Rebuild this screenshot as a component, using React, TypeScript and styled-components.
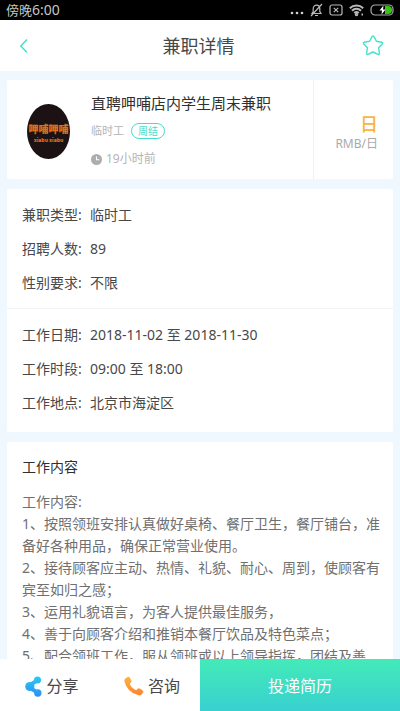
import React from "react";
import styled, { createGlobalStyle, css } from "styled-components";

const GlobalStyle = createGlobalStyle`
  *, *::before, *::after { box-sizing: border-box; }
  body {
    margin: 0;
    background: #eff7ff;
    color: #484848;
    font-family: "Noto Sans", "Noto Sans CJK SC", sans-serif;
    font-size: 14px;
    line-height: 22px;
  }
  h1, h2, p, dl, dt, dd { margin: 0; font: inherit; }
  button { border: 0; padding: 0; background: none; color: inherit; font: inherit; cursor: pointer; }
  svg { display: block; flex: none; }
`;

const Screen = styled.div`
  display: flex;
  flex-direction: column;
  height: 100vh;
`;

const StatusBar = styled.div`
  display: flex;
  align-items: center;
  justify-content: space-between;
  flex: none;
  height: 20px;
  padding: 0 6px;
  background: #000;
  color: #c4c4c4;
  font-size: 13px;
`;

const Clock = styled.span`
  font-size: 14px;
`;

const StatusIcons = styled.div`
  display: flex;
  align-items: center;
  gap: 6px;
`;

const Header = styled.header`
  display: flex;
  align-items: center;
  justify-content: space-between;
  flex: none;
  height: 51px;
  padding: 0 15px 0 12px;
  background: #fff;
  color: #47e0c8;
`;

const Title = styled.h1`
  color: #484848;
  font-size: 18px;
`;

const IconButton = styled.button`
  display: flex;
  align-items: center;
  justify-content: center;
  width: 24px;
  height: 32px;
`;

const Content = styled.main`
  display: flex;
  flex-direction: column;
  gap: 10px;
  flex: 1;
  min-height: 0;
  padding: 9px 7px 0;
  overflow-y: auto;
  scrollbar-width: none;
`;

const Card = styled.section`
  flex: none;
  background: #fff;
  border-radius: 2px;
`;

const JobCard = styled(Card)`
  display: flex;
  min-height: 99px;
`;

const JobMain = styled.div`
  display: flex;
  align-items: center;
  gap: 21px;
  flex: 1;
  padding: 3px 20px 0;
`;

const JobText = styled.div`
  display: flex;
  flex-direction: column;
  gap: 6px;
`;

const JobTitle = styled.h2`
  color: #303030;
  font-size: 15px;
`;

const Meta = styled.div<{ $gap: number; $size: number }>`
  display: flex;
  align-items: center;
  gap: ${(p) => p.$gap}px;
  color: #b4b4b4;
  font-size: ${(p) => p.$size}px;
`;

const Tag = styled.span`
  padding: 0 6px;
  border: 1px solid #47dccb;
  border-radius: 8px;
  color: #47dccb;
  font-size: 10px;
  line-height: 14px;
`;

const Pay = styled.div`
  display: flex;
  flex-direction: column;
  justify-content: center;
  align-items: flex-end;
  width: 80px;
  padding: 8px 15px 0 0;
  border-left: 1px solid #e6f2fd;
  color: #aaa;
  font-size: 12px;
  line-height: 20px;
`;

const PayAmount = styled.strong`
  color: #fbb53c;
  font-size: 18px;
  font-weight: 500;
`;

const FactList = styled.dl<{ $divided?: boolean }>`
  display: flex;
  flex-direction: column;
  gap: 12px;
  padding: 15px 15px 14px;
  ${(p) =>
    p.$divided &&
    css`
      padding-bottom: 18px;
      border-top: 1px solid #f1f4f7;
    `}
`;

const Fact = styled.div`
  display: flex;
  gap: 8px;
`;

const FactLabel = styled.dt`
  min-width: 60px;
  white-space: nowrap;
`;

const DetailCard = styled(Card)`
  padding: 14px 12px 15px 15px;
`;

const DetailTitle = styled.h2`
  margin-bottom: 13px;
  color: #303030;
`;

const Paragraph = styled.p`
  color: #707070;
`;

const ActionBar = styled.footer`
  display: flex;
  flex: none;
  height: 52px;
  background: #fff;
  font-size: 16px;
`;

const Contacts = styled.div`
  display: flex;
  flex: 1;
`;

const ContactButton = styled.button`
  display: flex;
  align-items: center;
  justify-content: center;
  gap: 4px;
  flex: 1;
  padding: 2px 0 0 4px;
`;

const ApplyButton = styled.button`
  flex: 1;
  padding-top: 2px;
  background: linear-gradient(#43eab8, #38d0d0);
  color: #fff;
`;

const MoreIcon = () => (
  <svg width="14" height="14" viewBox="0 0 14 14" fill="#d0d0d0" aria-hidden="true">
    <circle cx="2" cy="10" r="1.3" />
    <circle cx="7" cy="10" r="1.3" />
    <circle cx="12" cy="10" r="1.3" />
  </svg>
);

const MutedIcon = () => (
  <svg width="13" height="14" viewBox="0 0 13 14" fill="none" stroke="#b8b8b8" strokeWidth="1.2" aria-hidden="true">
    <path d="M2 10.500h9L9.800 8.500V5.500a3.300 3.300 0 0 0-6.600 0v3zM5 12.500h3M12 1 1 13" />
  </svg>
);

const NoSimIcon = () => (
  <svg width="14" height="14" viewBox="0 0 14 14" fill="none" stroke="#b8b8b8" strokeWidth="1.2" aria-hidden="true">
    <rect x="1" y="2" width="12" height="10" rx="2" />
    <path d="m4.800 4.800 4.400 4.400m0-4.400L4.800 9.200" />
  </svg>
);

const WifiIcon = () => (
  <svg width="15" height="14" viewBox="0 0 15 14" fill="none" stroke="#b8b8b8" strokeWidth="2" aria-hidden="true">
    <path d="M.8 5.200a9.500 9.500 0 0 1 13.400 0M3 7.700a6.300 6.300 0 0 1 9 0M5.300 10a3.200 3.200 0 0 1 4.400 0" />
    <circle cx="7.500" cy="11.500" r=".8" />
    <path d="M12.500 11.500h1.500" />
  </svg>
);

const BatteryIcon = () => (
  <svg width="24" height="14" viewBox="0 0 24 14" aria-hidden="true">
    <path d="M15 3h3a4 4 0 0 1 0 8h-3z" fill="#35c414" />
    <rect x="1" y="2" width="22" height="10" rx="4" fill="none" stroke="#a8a8a8" strokeWidth="1.200" />
    <path d="m13.500 2.500-4 5h2.500l-.5 4 4-5h-2.500z" fill="#fff" />
  </svg>
);

const BackIcon = () => (
  <svg width="10" height="16" viewBox="0 0 10 16" fill="none" stroke="currentColor" strokeWidth="1.500" aria-hidden="true">
    <path d="M8 1.500 1.800 8 8 14.500" />
  </svg>
);

const StarIcon = () => (
  <svg width="22" height="22" viewBox="0 0 22 22" fill="none" stroke="currentColor" strokeWidth="1.400" strokeLinejoin="round" aria-hidden="true">
    <path d="M10 1.600Q11 .2 12 1.600l2.400 4.700 5.300.9q1.600.4.600 1.700l-3.700 3.900.8 5.400q.1 1.700-1.500 1.100L11 17l-4.900 2.300q-1.600.6-1.500-1.100l.8-5.400L1.700 8.900q-1-1.300.6-1.700l5.300-.9z" />
  </svg>
);

const ClockIcon = () => (
  <svg width="11" height="11" viewBox="0 0 11 11" aria-hidden="true">
    <circle cx="5.500" cy="5.500" r="5.500" fill="#adadad" />
    <path d="M5.500 2.500v3.300h2.800" fill="none" stroke="#fff" strokeWidth="1.100" />
  </svg>
);

const BrandLogo = () => (
  <svg width="43" height="55" viewBox="0 0 43 55" role="img" aria-label="呷哺呷哺">
    <ellipse cx="21.500" cy="27.500" rx="21.500" ry="27.500" fill="#1d1213" />
    <g fill="#e07018" textAnchor="middle" fontWeight="900" fontFamily='"Noto Sans CJK SC", sans-serif'>
      <text x="21.500" y="29" fontSize="10">呷哺呷哺</text>
      <text x="21.500" y="38" fontSize="5">xiabu xiabu</text>
    </g>
  </svg>
);

const ShareIcon = () => (
  <svg width="17" height="21" viewBox="0 0 17 21" aria-hidden="true">
    <defs>
      <linearGradient id="share" gradientUnits="userSpaceOnUse" x1="0" y1="0" x2="0" y2="21">
        <stop offset="0" stopColor="#27ccf5" />
        <stop offset="1" stopColor="#2f8df5" />
      </linearGradient>
    </defs>
    <g fill="url(#share)">
      <circle cx="12.500" cy="4" r="3.500" />
      <circle cx="4.800" cy="10.500" r="4.600" />
      <circle cx="12.800" cy="17" r="3.700" />
      <path d="m3 8 8.500-5.500 2 3L7 10.500l7 5-2 3L3 13z" />
    </g>
  </svg>
);

const PhoneIcon = () => (
  <svg width="20" height="20" viewBox="0 0 20 20" aria-hidden="true">
    <defs>
      <linearGradient id="phone" x1="0" y1="0" x2="0" y2="1">
        <stop offset="0" stopColor="#ffb43c" />
        <stop offset="1" stopColor="#fb8331" />
      </linearGradient>
    </defs>
    <path
      d="M1.300 2.600 3.600 1q1.300-.8 2.100.5l1.700 3q.6 1.200-.5 2.100L5.700 7.700q1.600 4.300 6.500 6.500l1.400-1.500q.9-.9 2.100-.2l3 1.900q1.200.8.400 2l-1.600 2.100q-1 1.100-2.800.8Q3.200 16.500.4 5.200.200 3.600 1.300 2.600z"
      fill="url(#phone)"
    />
  </svg>
);

const jobFacts = [
  ["兼职类型:", "临时工"],
  ["招聘人数:", "89"],
  ["性别要求:", "不限"],
];

const scheduleFacts = [
  ["工作日期:", "2018-11-02 至 2018-11-30"],
  ["工作时段:", "09:00 至 18:00"],
  ["工作地点:", "北京市海淀区"],
];

const details = [
  "工作内容:",
  "1、按照领班安排认真做好桌椅、餐厅卫生\uff0c餐厅铺台\uff0c准备好各种用品\uff0c确保正常营业使用。",
  "2、接待顾客应主动、热情、礼貌、耐心、周到\uff0c使顾客有宾至如归之感\uff1b",
  "3、运用礼貌语言\uff0c为客人提供最佳服务\uff0c",
  "4、善于向顾客介绍和推销本餐厅饮品及特色菜点\uff1b",
  "5、配合领班工作\uff0c服从领班或以上领导指挥\uff0c团结及善",
];

const Facts = ({ items, divided }: { items: string[][]; divided?: boolean }) => (
  <FactList $divided={divided}>
    {items.map(([label, value]) => (
      <Fact key={label}>
        <FactLabel>{label}</FactLabel>
        <dd>{value}</dd>
      </Fact>
    ))}
  </FactList>
);

export default function App() {
  return (
    <>
      <GlobalStyle />
      <Screen lang="zh-CN">
        <StatusBar>
          <span>
            傍晚<Clock>6:00</Clock>
          </span>
          <StatusIcons>
            <MoreIcon />
            <MutedIcon />
            <NoSimIcon />
            <WifiIcon />
            <BatteryIcon />
          </StatusIcons>
        </StatusBar>
        <Header>
          <IconButton type="button" aria-label="返回">
            <BackIcon />
          </IconButton>
          <Title>兼职详情</Title>
          <IconButton type="button" aria-label="收藏">
            <StarIcon />
          </IconButton>
        </Header>
        <Content>
          <JobCard>
            <JobMain>
              <BrandLogo />
              <JobText>
                <JobTitle>直聘呷哺店内学生周末兼职</JobTitle>
                <Meta $gap={7} $size={11}>
                  临时工<Tag>周结</Tag>
                </Meta>
                <Meta $gap={4} $size={12}>
                  <ClockIcon />
                  19小时前
                </Meta>
              </JobText>
            </JobMain>
            <Pay>
              <PayAmount>日</PayAmount>
              <span>RMB/日</span>
            </Pay>
          </JobCard>
          <Card>
            <Facts items={jobFacts} />
            <Facts items={scheduleFacts} divided />
          </Card>
          <DetailCard>
            <DetailTitle>工作内容</DetailTitle>
            {details.map((text) => (
              <Paragraph key={text}>{text}</Paragraph>
            ))}
          </DetailCard>
        </Content>
        <ActionBar>
          <Contacts>
            <ContactButton type="button">
              <ShareIcon />
              分享
            </ContactButton>
            <ContactButton type="button">
              <PhoneIcon />
              咨询
            </ContactButton>
          </Contacts>
          <ApplyButton type="button">投递简历</ApplyButton>
        </ActionBar>
      </Screen>
    </>
  );
}
